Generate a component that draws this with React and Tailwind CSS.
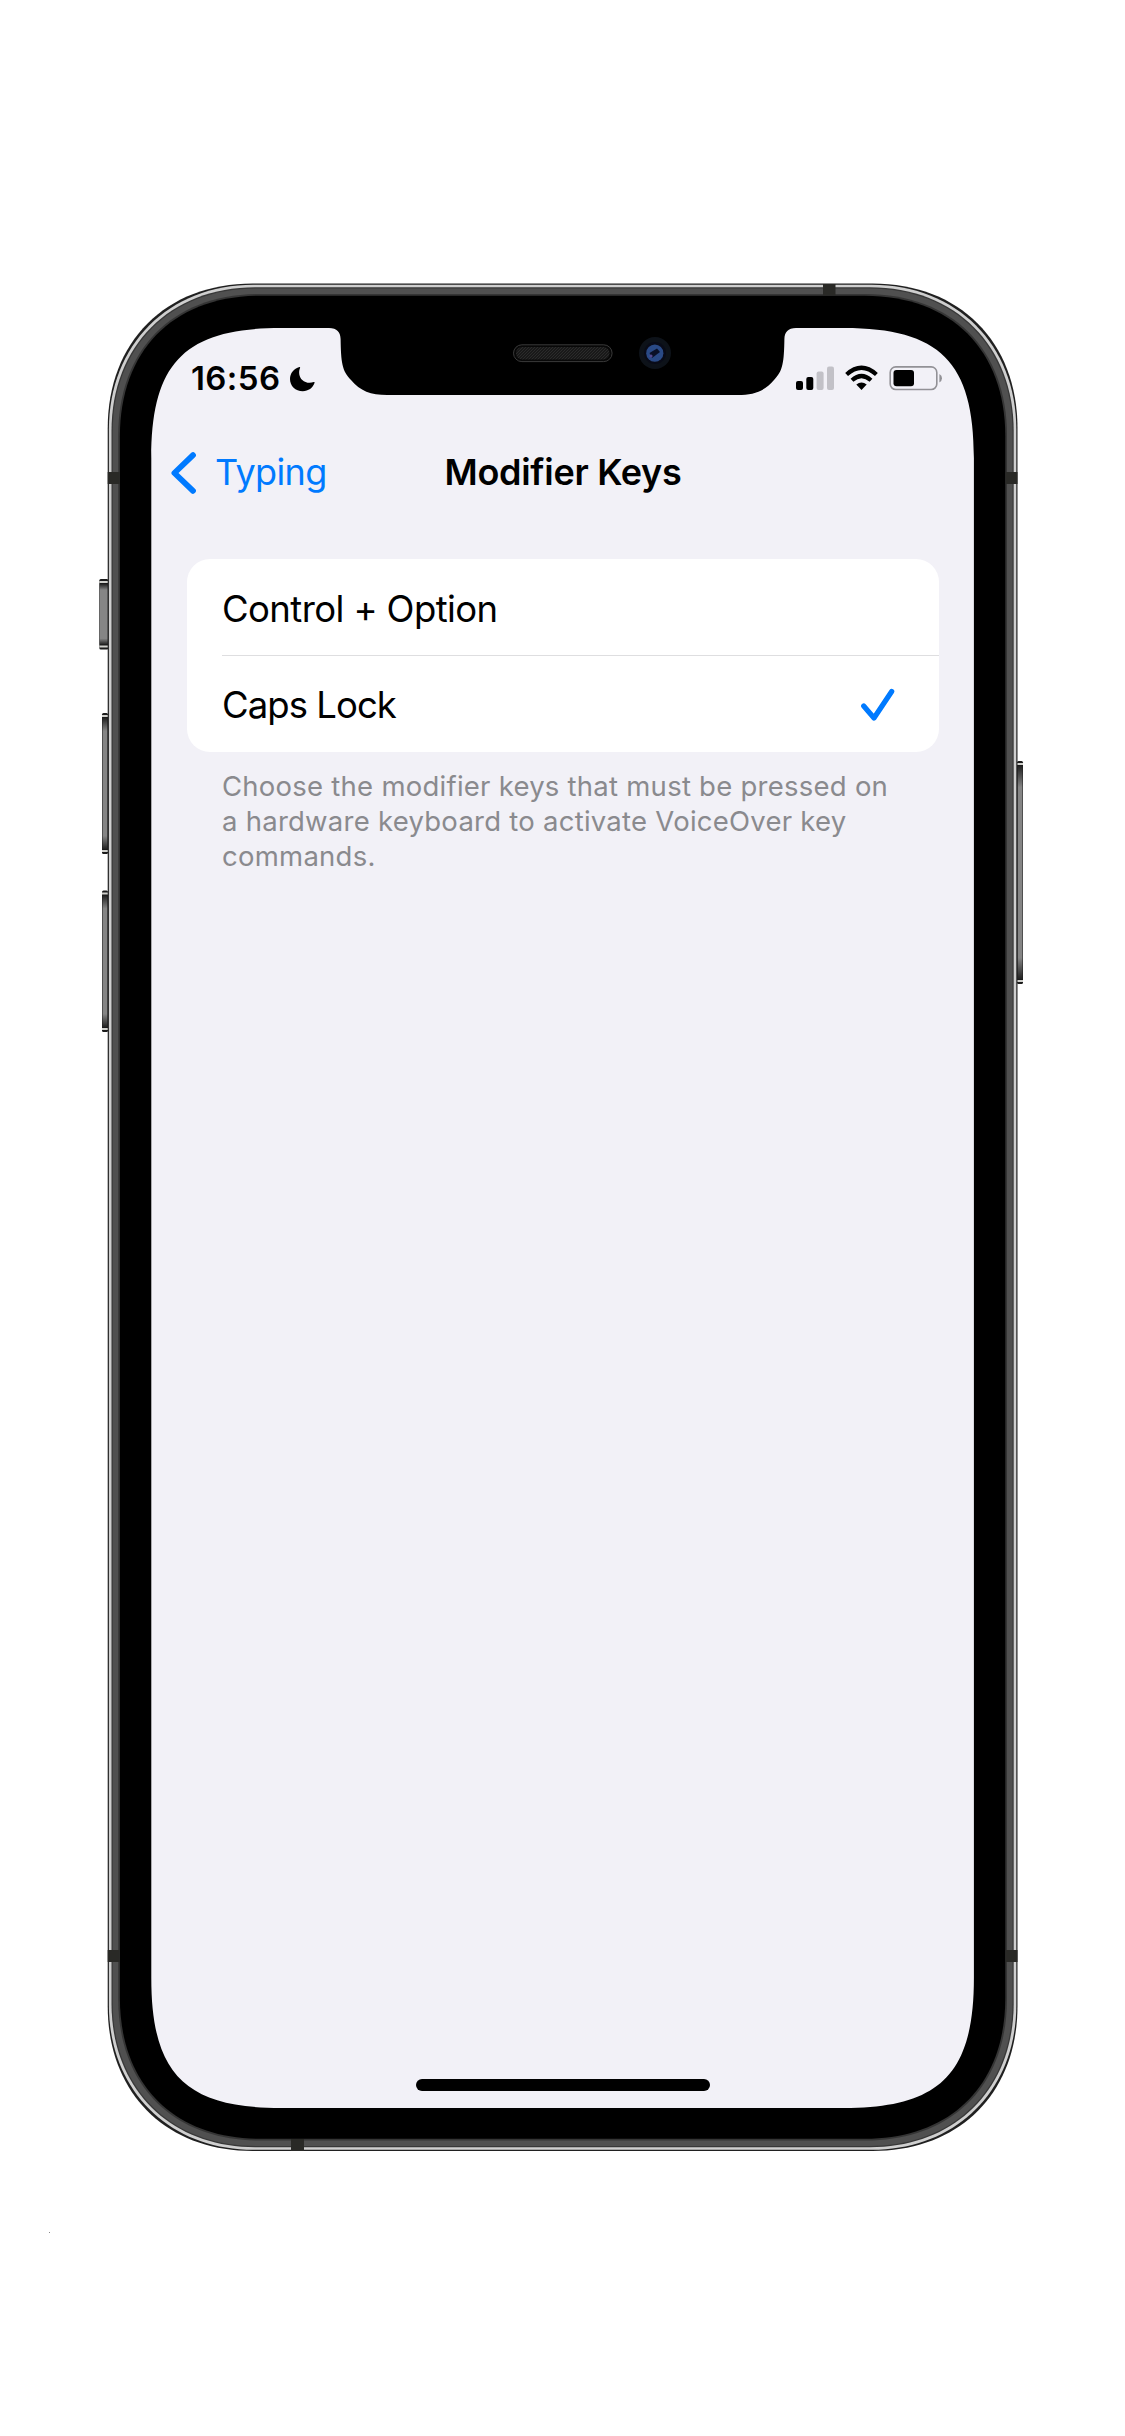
const ring = (d, bulge = 0) => {
  const x = 107.7 + d, y = 283.5 + d, r = 1017.5 - d, b = 2151 - d;
  const e = 145 - 0.35 * d, a = 58 - 0.53 * d + bulge;
  return `M${x} ${y + e}C${x} ${y + a} ${x + a} ${y} ${x + e} ${y}H${r - e}C${r - a} ${y} ${r} ${y + a} ${r} ${y + e}V${b - e}C${r} ${b - a} ${r - a} ${b} ${r - e} ${b}H${x + e}C${x + a} ${b} ${x} ${b - a} ${x} ${b - e}Z`;
};

const SCREEN =
  "M151.3 458C151.3 362 185.3 328 281.3 328H329C337 328 340.3 332 340.6 339C341 362 342 371 351 380C360 391 371 395 387 395H738C754 395 765 391 774 380C783 371 784 362 784.4 339C784.7 332 788 328 796 328H843.9C939.9 328 973.9 362 973.9 458V1978C973.9 2074 939.9 2108 843.9 2108H281.3C185.3 2108 151.3 2074 151.3 1978Z";

function SideButton({ x, y, w, h }) {
  return (
    <g>
      <rect x={x} y={y} width={w} height={h} rx="1.5" fill="#1b1b1b" />
      <rect x={x} y={y + 2} width={w} height="2" fill="#d0d0cc" />
      <rect x={x} y={y + h - 4} width={w} height="2" fill="#d0d0cc" />
      <rect x={x + 0.5} y={y + 5} width={w - 1} height={h - 10} fill="url(#button)" />
    </g>
  );
}

function Frame() {
  return (
    <svg className="absolute inset-0" width="1125" height="2436" viewBox="0 0 1125 2436">
      <defs>
        <linearGradient id="button" x1="0" x2="0" y1="0" y2="1">
          <stop offset="0" stopColor="#222" />
          <stop offset=".1" stopColor="#858585" />
          <stop offset=".9" stopColor="#858585" />
          <stop offset="1" stopColor="#222" />
        </linearGradient>
        <pattern id="mesh" width="3" height="3" patternUnits="userSpaceOnUse">
          <rect width="3" height="3" fill="#191919" />
          <path d="M0 3L3 0" stroke="#2d2d2d" strokeWidth=".9" />
        </pattern>
      </defs>
      <SideButton x={99.3} y={579} w={9} h={70.5} />
      <SideButton x={102} y={713} w={6} h={141} />
      <SideButton x={102} y={890.5} w={6} h={141.5} />
      <SideButton x={1017} y={761} w={6} h={223} />
      <path d={ring(0)} fill="#202020" />
      <path d={ring(1.2, 2.5)} fill="#cfcfcf" />
      <path d={ring(3.8, 2.5)} fill="#383838" />
      <path d={ring(5, 2.5)} fill="#505050" />
      <path d={ring(10.5, 2.5)} fill="#353535" />
      <path d={ring(12.2, 2.5)} fill="#000" />
      <g fill="#292926">
        <rect x="107.7" y="472" width="12" height="12" />
        <rect x="1005.5" y="472" width="12" height="12" />
        <rect x="107.7" y="1950" width="12" height="12" />
        <rect x="1005.5" y="1950" width="12" height="12" />
        <rect x="823" y="284" width="12.5" height="11.5" />
        <rect x="291" y="2139" width="13" height="12" />
      </g>
      <path d={SCREEN} fill="#f2f1f7" />
      <rect x="513.5" y="344.8" width="98.6" height="16.8" rx="8.4" fill="#080808" stroke="#3a3a3a" />
      <rect x="516" y="347" width="93.5" height="12.5" rx="6.2" fill="url(#mesh)" />
      <circle cx="655" cy="353" r="16" fill="#0d1219" />
      <circle cx="655" cy="353" r="11" fill="#090b18" />
      <circle cx="654.8" cy="353.2" r="8.6" fill="#2a4a86" />
      <path d="M649.5 353L657 348.5L660 352L652 358Z" fill="#0a1027" />
      <circle cx="651" cy="356" r="1.6" fill="#54488f" />
      <rect x="49" y="2232" width="1" height="1" fill="#888" />
    </svg>
  );
}

function StatusBar() {
  return (
    <div className="flex h-[102px] justify-between pl-[39px] pr-[31px]">
      <div className="flex h-[101px] items-center">
        <span className="w-[89px] whitespace-nowrap text-[33px] font-semibold leading-none tracking-[0.4px]">16:56</span>
        <svg className="ml-[9px]" width="27" height="26" viewBox="0 0 27 26">
          <path d="M10.5 1C10.9.7 11.3 1.2 11.1 1.7C9.2 6 10.2 11.2 13.3 14C16.2 16.8 20.5 17.6 24.8 16.1C25.4 15.9 25.8 16.3 25.6 16.8C23.9 22 19.3 25.2 13.8 25.2C6.4 25.2 1 20 1 13C1 7.3 4.8 2.5 10.5 1Z" />
        </svg>
      </div>
      <svg className="mt-[36px]" width="147" height="30" viewBox="0 0 147 30">
        <rect x="0" y="17" width="7" height="9" rx="2" />
        <rect x="10.3" y="13" width="7" height="13" rx="2" />
        <rect x="20.6" y="7.5" width="7" height="18.5" rx="2" fill="#c2c1c7" />
        <rect x="31" y="2.5" width="7" height="23.5" rx="2" fill="#c2c1c7" />
        <g fill="none" stroke="#000" strokeWidth="4.2">
          <path d="M50.6 10.5Q65.5-2.9 80.4 10.5" />
          <path d="M56 16.2Q65.5 7.7 75 16.2" />
        </g>
        <path d="M60.3 20.6Q65.5 16.4 70.7 20.6L65.5 26Z" />
        <rect x="94.2" y="2.9" width="46.6" height="22.6" rx="5.6" fill="none" stroke="#929196" strokeWidth="1.6" />
        <rect x="97.5" y="6" width="20.5" height="16.3" rx="3" />
        <path d="M143.4 10Q146 11.5 146 14.2T143.4 18.5Z" fill="#929196" />
      </svg>
    </div>
  );
}

export default function App() {
  return (
    <div className="relative h-[2436px] w-[1125px] overflow-hidden bg-white font-['Inter',sans-serif] text-black">
      <Frame />
      <div className="relative flex h-full flex-col pb-[328px] pl-[152px] pr-[151px] pt-[328px]">
        <StatusBar />
        <header className="grid h-[85px] grid-cols-[1fr_auto_1fr] items-center">
          <div className="flex items-center pl-[18px] text-[#007aff]">
            <svg width="26" height="42" viewBox="0 0 26 42" fill="none" stroke="currentColor" strokeWidth="5.8" strokeLinecap="round" strokeLinejoin="round">
              <path d="M23 3.2L4.4 21L23 38.8" />
            </svg>
            <span className="ml-[19px] pb-[1px] text-[36px] leading-none tracking-[-0.6px]">Typing</span>
          </div>
          <h1 className="whitespace-nowrap pb-[1px] text-[36px] font-semibold leading-none tracking-[-0.3px]">Modifier Keys</h1>
        </header>
        <main className="mt-[44px] pl-[35px] pr-[35px]">
          <div className="overflow-hidden rounded-[23px] bg-white text-[36.5px] leading-none">
            <div className="pl-[35px]">
              <div className="flex h-[97px] items-center border-b border-[#dedee0] pt-[4px]">
                <span className="whitespace-nowrap tracking-[-0.6px]">Control + Option</span>
              </div>
            </div>
            <div className="flex h-[96px] items-center justify-between pl-[35px] pr-[44px] pt-[2px]">
              <span className="whitespace-nowrap tracking-[-0.95px]">Caps Lock</span>
              <svg width="35" height="34" viewBox="0 0 35 34" fill="none" stroke="#007aff" strokeWidth="5.2" strokeLinecap="round" strokeLinejoin="round">
                <path d="M3.7 18L14 30L31.7 3.5" />
              </svg>
            </div>
          </div>
          <p className="ml-[35px] mt-[17px] whitespace-nowrap text-[27.5px] leading-[35px] tracking-[0.25px] text-[#8a8a8e]">
            Choose the modifier keys that must be pressed on
            <br />
            a hardware keyboard to activate VoiceOver key
            <br />
            commands.
          </p>
        </main>
        <div className="mb-[17px] mt-auto h-[12px] w-[294px] self-center rounded-full bg-black" />
      </div>
    </div>
  );
}
